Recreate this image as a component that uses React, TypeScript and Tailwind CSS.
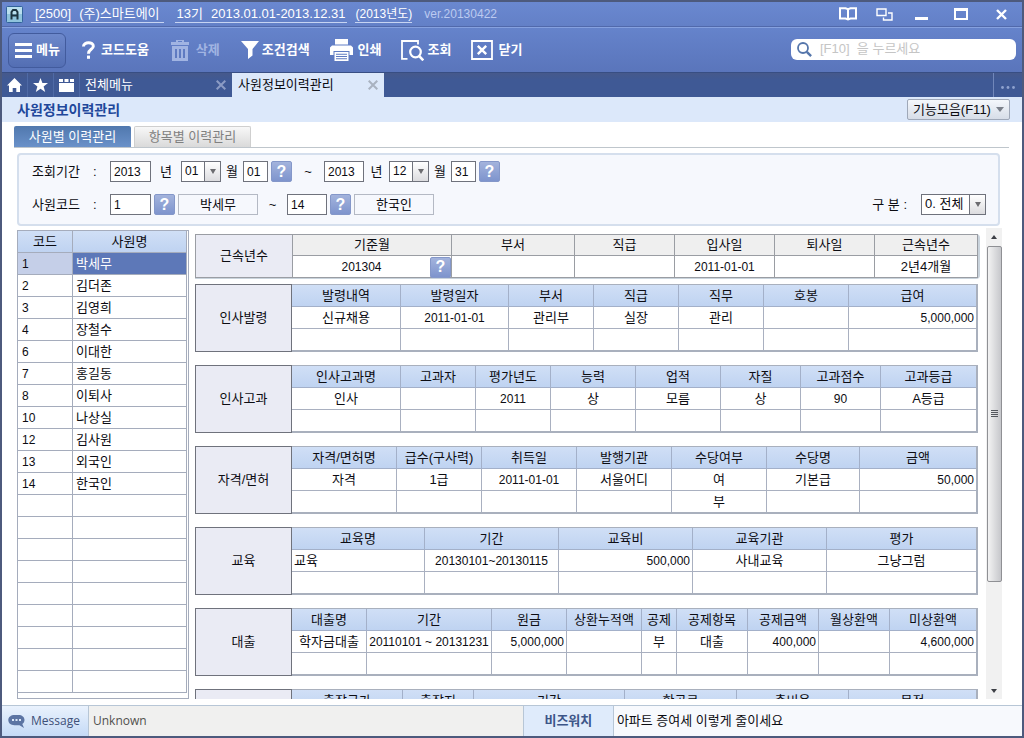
import React, { useId } from "react";

type Column = { title: string; width: string };
type Align = "left" | "center" | "right";
type CellData = { text: string; align?: Align };
type Section = { label: string; columns: Column[]; cells: (CellData | null)[][] };

const sections: Section[] = [
  {
    label: "인사발령",
    columns: [
      { title: "발령내역", width: "w-[109px]" },
      { title: "발령일자", width: "w-[108px]" },
      { title: "부서", width: "w-[85px]" },
      { title: "직급", width: "w-[85px]" },
      { title: "직무", width: "w-[85px]" },
      { title: "호봉", width: "w-[85px]" },
      { title: "급여", width: "" },
    ],
    cells: [
      [{ text: "신규채용" }, { text: "2011-01-01" }, { text: "관리부" }, { text: "실장" }, { text: "관리" }, null, { text: "5,000,000", align: "right" }],
      [null, null, null, null, null, null, null],
    ],
  },
  {
    label: "인사고과",
    columns: [
      { title: "인사고과명", width: "w-[109px]" },
      { title: "고과자", width: "w-[75px]" },
      { title: "평가년도", width: "w-[75px]" },
      { title: "능력", width: "w-[85px]" },
      { title: "업적", width: "w-[85px]" },
      { title: "자질", width: "w-[80px]" },
      { title: "고과점수", width: "w-[80px]" },
      { title: "고과등급", width: "" },
    ],
    cells: [
      [{ text: "인사" }, null, { text: "2011" }, { text: "상" }, { text: "모름" }, { text: "상" }, { text: "90" }, { text: "A등급" }],
      [null, null, null, null, null, null, null, null],
    ],
  },
  {
    label: "자격/면허",
    columns: [
      { title: "자격/면허명", width: "w-[105px]" },
      { title: "급수(구사력)", width: "w-[85px]" },
      { title: "취득일", width: "w-[95px]" },
      { title: "발행기관", width: "w-[95px]" },
      { title: "수당여부", width: "w-[95px]" },
      { title: "수당명", width: "w-[93px]" },
      { title: "금액", width: "" },
    ],
    cells: [
      [{ text: "자격" }, { text: "1급" }, { text: "2011-01-01" }, { text: "서울어디" }, { text: "여" }, { text: "기본급" }, { text: "50,000", align: "right" }],
      [null, null, null, null, { text: "부" }, null, null],
    ],
  },
  {
    label: "교육",
    columns: [
      { title: "교육명", width: "w-[133px]" },
      { title: "기간", width: "w-[134px]" },
      { title: "교육비", width: "w-[134px]" },
      { title: "교육기관", width: "w-[134px]" },
      { title: "평가", width: "" },
    ],
    cells: [
      [{ text: "교육", align: "left" }, { text: "20130101~20130115" }, { text: "500,000", align: "right" }, { text: "사내교육" }, { text: "그냥그럼" }],
      [null, null, null, null, null],
    ],
  },
  {
    label: "대출",
    columns: [
      { title: "대출명", width: "w-[75px]" },
      { title: "기간", width: "w-[125px]" },
      { title: "원금", width: "w-[75px]" },
      { title: "상환누적액", width: "w-[75px]" },
      { title: "공제", width: "w-[35px]" },
      { title: "공제항목", width: "w-[71px]" },
      { title: "공제금액", width: "w-[71px]" },
      { title: "월상환액", width: "w-[71px]" },
      { title: "미상환액", width: "" },
    ],
    cells: [
      [{ text: "학자금대출" }, { text: "20110101 ~ 20131231" }, { text: "5,000,000", align: "right" }, null, { text: "부" }, { text: "대출" }, { text: "400,000", align: "right" }, null, { text: "4,600,000", align: "right" }],
      [null, null, null, null, null, null, null, null, null],
    ],
  },
  {
    label: "출장",
    columns: [
      { title: "출장국가", width: "w-[111px]" },
      { title: "출장지", width: "w-[71px]" },
      { title: "기간", width: "w-[151px]" },
      { title: "항공료", width: "w-[112px]" },
      { title: "총비용", width: "w-[112px]" },
      { title: "목적", width: "" },
    ],
    cells: [
      [null, null, null, null, null, null],
      [null, null, null, null, null, null],
    ],
  },
];

const employees: [string, string][] = [
  ["1", "박세무"],
  ["2", "김더존"],
  ["3", "김영희"],
  ["4", "장철수"],
  ["6", "이대한"],
  ["7", "홍길동"],
  ["8", "이퇴사"],
  ["10", "나상실"],
  ["12", "김사원"],
  ["13", "외국인"],
  ["14", "한국인"],
];

const blankRows = [0, 1, 2, 3, 4, 5, 6, 7, 8];

const alignClass: Record<Align, string> = {
  left: "text-left",
  center: "text-center",
  right: "text-right",
};

function Cell({ data }: { data: CellData | null }) {
  const numeric = data !== null && /^[\d,\-~ ]+$/.test(data.text);
  return (
    <td
      className={`h-[22px] border-r border-b border-[#a9b0c0] px-[2px] last:border-r-0 ${
        numeric ? "text-xs leading-4" : ""
      } ${alignClass[data?.align ?? "center"]}`}
    >
      {data?.text}
    </td>
  );
}

function SectionBlock({ section }: { section: Section }) {
  const id = useId();
  return (
    <div className="flex h-[68px] shrink-0">
      <h3
        id={id}
        className="flex w-[97px] shrink-0 items-center justify-center border border-[#6f727c] bg-[#eaebf4]"
      >
        {section.label}
      </h3>
      <div className="min-w-0 flex-1 overflow-hidden border-t border-r-2 border-b-2 border-[#a9b0bd]">
        <table aria-labelledby={id} className="w-full table-fixed border-separate border-spacing-0">
          <thead>
            <tr>
              {section.columns.map((c) => (
                <th
                  key={c.title}
                  className={`h-[22px] border-r border-b border-[#a3b0c9] bg-linear-to-b from-[#d0dff6] to-[#bfd3f1] font-normal last:border-r-0 ${c.width}`}
                >
                  {c.title}
                </th>
              ))}
            </tr>
          </thead>
          <tbody>
            {section.cells.map((row, r) => (
              <tr key={r}>
                {row.map((cell, i) => (
                  <Cell key={i} data={cell} />
                ))}
              </tr>
            ))}
          </tbody>
        </table>
      </div>
    </div>
  );
}

const tenureHeads: Column[] = [
  { title: "기준월", width: "w-[159px]" },
  { title: "부서", width: "w-[123px]" },
  { title: "직급", width: "w-[100px]" },
  { title: "입사일", width: "w-[100px]" },
  { title: "퇴사일", width: "w-[100px]" },
  { title: "근속년수", width: "" },
];

function TenureBlock() {
  const cell = "h-[22px] border-r border-[#9a9da3] text-center";
  return (
    <div className="flex h-[45px] shrink-0 rounded-r-sm border-r-2 border-b border-[#c9d3dc]">
      <h3 id="tenure" className="flex w-[98px] shrink-0 items-center justify-center border border-[#9a9da3] bg-[#eaebf4]">
        근속년수
      </h3>
      <div className="min-w-0 flex-1 border-y border-[#9a9da3]">
        <table aria-labelledby="tenure" className="w-full table-fixed border-separate border-spacing-0">
          <thead>
            <tr>
              {tenureHeads.map((c) => (
                <th key={c.title} className={`h-[21px] border-r border-b border-[#9a9da3] bg-[#efefef] font-normal ${c.width}`}>
                  {c.title}
                </th>
              ))}
            </tr>
          </thead>
          <tbody>
            <tr>
              <td className={cell}>
                <div className="flex items-center">
                  <span className="flex-1 text-xs">201304</span>
                  <HelpButton />
                </div>
              </td>
              <td className={cell} />
              <td className={cell} />
              <td className={`${cell} text-xs leading-4`}>2011-01-01</td>
              <td className={cell} />
              <td className={cell}>2년4개월</td>
            </tr>
          </tbody>
        </table>
      </div>
    </div>
  );
}

function HelpButton() {
  return (
    <button
      type="button"
      className="flex h-[21px] w-[21px] shrink-0 items-center justify-center rounded-xs border border-[#8497c9] bg-linear-to-b from-[#a3b3dc] to-[#7e94cd] text-base leading-4 font-bold text-white"
    >
      ?
    </button>
  );
}

function Field({ id, value, width }: { id: string; value: string; width: string }) {
  return (
    <input
      id={id}
      defaultValue={value}
      className={`h-[21px] border border-[#6f727c] bg-white px-[3px] text-xs outline-none ${width}`}
    />
  );
}

function Drop({ id, value, width, text }: { id: string; value: string; width: string; text: string }) {
  return (
    <span className={`relative flex h-[21px] border border-[#6f727c] bg-white ${width}`}>
      <select id={id} defaultValue={value} className={`w-full appearance-none pr-4 pl-[3px] pb-[2px] leading-4 outline-none ${text}`}>
        <option>{value}</option>
      </select>
      <span className="pointer-events-none absolute inset-y-0 right-0 flex w-4 items-center justify-center border-l border-[#6f727c] bg-linear-to-b from-white to-[#dcdcdf]">
        <svg viewBox="0 0 6 5" className="h-[5px] w-[6px]" fill="#6c6c70">
          <path d="M0 0h6L3 5z" />
        </svg>
      </span>
    </span>
  );
}

function SearchPanel() {
  return (
    <form className="mt-[5px] mr-[22px] ml-[15px] flex flex-col gap-3 rounded-sm border-2 border-[#d5dfed] bg-[#f6f8fd] pt-[6px] pr-3 pb-[9px] pl-[13px]">
      <div className="flex items-center">
        <label htmlFor="from-year" className="w-[61px]">조회기간</label>
        <span className="w-[17px]">:</span>
        <Field id="from-year" value="2013" width="w-[41px]" />
        <label htmlFor="from-year" className="w-[30px] text-center">년</label>
        <Drop id="from-month" value="01" width="w-10" text="text-xs" />
        <label htmlFor="from-month" className="w-[22px] text-center">월</label>
        <Field id="from-day" value="01" width="mr-[3px] w-[25px]" />
        <HelpButton />
        <span className="w-8 text-center">~</span>
        <Field id="to-year" value="2013" width="w-10" />
        <label htmlFor="to-year" className="w-[25px] text-center">년</label>
        <Drop id="to-month" value="12" width="w-10" text="text-xs" />
        <label htmlFor="to-month" className="w-[22px] text-center">월</label>
        <Field id="to-day" value="31" width="mr-[3px] w-[25px]" />
        <HelpButton />
      </div>
      <div className="flex items-center">
        <label htmlFor="from-code" className="w-[61px]">사원코드</label>
        <span className="w-[17px]">:</span>
        <Field id="from-code" value="1" width="mr-[3px] w-[41px]" />
        <HelpButton />
        <output className="ml-[3px] flex h-[21px] w-20 items-center justify-center border border-[#b4b9c4]">박세무</output>
        <span className="w-[29px] text-center">~</span>
        <Field id="to-code" value="14" width="mr-[3px] w-10" />
        <HelpButton />
        <output className="ml-[3px] flex h-[21px] w-20 items-center justify-center border border-[#b4b9c4]">한국인</output>
        <label htmlFor="kind" className="mr-[14px] ml-auto">구 분 :</label>
        <Drop id="kind" value="0. 전체" width="w-[65px]" text="text-[13px]" />
      </div>
    </form>
  );
}

function EmployeeList() {
  const line = "border-r border-b border-[#a5acbc]";
  return (
    <div className="w-[172px] shrink-0 overflow-hidden border border-[#a5acbc]">
      <table className="w-[169px] table-fixed border-separate border-spacing-0">
        <thead>
          <tr>
            <th className={`h-[22px] w-[55px] bg-linear-to-b from-[#d0dff6] to-[#bfd3f1] font-normal ${line}`}>코드</th>
            <th className={`bg-linear-to-b from-[#d0dff6] to-[#bfd3f1] font-normal ${line}`}>사원명</th>
          </tr>
        </thead>
        <tbody>
          {employees.map(([code, name], i) => (
            <tr key={code}>
              <td className={`h-[22px] pl-1 text-xs leading-4 ${line} ${i === 0 ? "bg-[#c5cfe8]" : ""}`}>{code}</td>
              <td className={`pl-[3px] ${line} ${i === 0 ? "bg-[#5d78b8] text-white" : ""}`}>{name}</td>
            </tr>
          ))}
          {blankRows.map((n) => (
            <tr key={n}>
              <td className={`h-[22px] ${line}`} />
              <td className={line} />
            </tr>
          ))}
        </tbody>
      </table>
    </div>
  );
}

function ScrollBar() {
  return (
    <div className="ml-[6px] flex w-4 shrink-0 flex-col items-center bg-[#f1f1f1]">
      <div className="flex h-[18px] items-center">
        <svg viewBox="0 0 6 4" className="h-1 w-[6px]" fill="#3c3f45">
          <path d="M3 0l3 4H0z" />
        </svg>
      </div>
      <div className="flex w-[15px] flex-[76] items-center justify-center rounded-xs border border-[#8f9094] bg-linear-to-r from-[#f3f3f3] to-[#c6c7cb]">
        <div className="flex w-[7px] flex-col gap-px">
          <i className="h-px bg-[#55585e]" />
          <i className="h-px bg-[#55585e]" />
          <i className="h-px bg-[#55585e]" />
          <i className="h-px bg-[#55585e]" />
        </div>
      </div>
      <div className="flex-[23]" />
      <div className="flex h-4 items-center">
        <svg viewBox="0 0 6 4" className="h-1 w-[6px]" fill="#3c3f45">
          <path d="M0 0h6L3 4z" />
        </svg>
      </div>
    </div>
  );
}

function TitleBar() {
  return (
    <header className="flex h-[25px] shrink-0 items-center border-b border-[#5169ab] bg-linear-to-b from-[#6a88d0] to-[#6380c7] pl-1 text-[13px] leading-4 text-white">
      <svg viewBox="0 0 17 17" className="mr-[8px] h-[17px] w-[17px]">
        <rect x="0.5" y="0.5" width="16" height="16" rx="1" fill="#8fc3dc" stroke="#31639a" />
        <path d="M1 1h15v7H1z" fill="#b9dfee" />
        <path d="M5.500 13.500V6l1.500-2h3l1.500 2v7.500M5.500 9.500h6" fill="none" stroke="#1d3340" strokeWidth="2" />
      </svg>
      <span className="flex gap-2 border-b border-[#c7d4f2] px-1">
        <span>[2500]</span>
        <span>(주)스마트에이</span>
      </span>
      <span className="ml-[11px] flex gap-2 border-b border-[#c7d4f2] px-[2px]">
        <span>13기</span>
        <span>2013.01.01-2013.12.31</span>
      </span>
      <span className="ml-2 border-b border-[#c7d4f2] text-xs leading-4">(2013년도)</span>
      <span className="ml-3 text-xs text-[#bccaf0]">ver.20130422</span>
      <div className="mr-[15px] ml-auto flex items-center">
        <button type="button" className="mr-[19px]">
          <svg viewBox="0 0 18 14" className="h-[14px] w-[18px]" fill="none" stroke="white" strokeWidth="2">
            <path d="M1 1.2h5.500L9 2.200l2.500-1H17v10.300h-5.500L9 12.500l-2.500-1H1zM9 2v11.500" />
          </svg>
        </button>
        <button type="button" className="mr-[22px]">
          <svg viewBox="0 0 17 13" className="h-[13px] w-[17px]" fill="none" stroke="white" strokeWidth="1.400">
            <path d="M1 1h9v6.500H1zM12 5h4v7H7.500V9.500" />
          </svg>
        </button>
        <button type="button" className="mr-[26px]">
          <svg viewBox="0 0 13 13" className="h-[13px] w-[13px]" fill="white">
            <path d="M0 9h13v3H0z" />
          </svg>
        </button>
        <button type="button" className="mr-7">
          <svg viewBox="0 0 14 12" className="h-3 w-[14px]" fill="white" fillRule="evenodd">
            <path d="M0 0h14v12H0zM2 3h10v7H2z" />
          </svg>
        </button>
        <button type="button">
          <svg viewBox="0 0 11 11" className="h-[11px] w-[11px]" stroke="white" strokeWidth="2.400">
            <path d="M1 1l9 9M10 1l-9 9" />
          </svg>
        </button>
      </div>
    </header>
  );
}

function ToolBar() {
  const item = "flex items-center text-[13px] font-bold";
  return (
    <nav className="flex h-[45px] shrink-0 items-center border-t border-[#86a1df] bg-linear-to-b from-[#6583cb] to-[#5a75bb] pl-[6px] text-white">
      <button
        type="button"
        className={`${item} h-[35px] w-[58px] gap-1 rounded-md border border-[#425b9d] bg-linear-to-b from-[#6d88cb] to-[#536eb3] pl-[6px]`}
      >
        <svg viewBox="0 0 17 15" className="h-[15px] w-[17px]" fill="white">
          <path d="M0 0h17v3H0zM0 6h17v3H0zM0 12h17v3H0z" />
        </svg>
        메뉴
      </button>
      <button type="button" className={`${item} ml-[16px] gap-[6px]`}>
        <svg viewBox="0 0 13 18" className="h-[18px] w-[13px]" fill="none" stroke="white" strokeWidth="3">
          <path d="M1.500 5.500C1.500 0.500 11.500 0.300 11.300 5.200 11.200 8.500 6.500 8.200 6.500 12.800" />
          <path d="M6.500 14.600v3.200" />
        </svg>
        코드도움
      </button>
      <button type="button" disabled className={`${item} ml-[22px] gap-[7px] text-[#a1b4e2]`}>
        <svg viewBox="0 0 18 21" className="h-[21px] w-[18px]" fill="#a1b4e2" fillRule="evenodd">
          <path d="M5 0h8v2h5v3H0V2h5zM7 1v1h4V1zM1 6h16v15H1zM4 9v9h2V9zM8 9v9h2V9zM12 9v9h2V9z" />
        </svg>
        삭제
      </button>
      <button type="button" className={`${item} ml-[21px] gap-[3px]`}>
        <svg viewBox="0 0 18 18" className="h-[18px] w-[18px]" fill="white">
          <path d="M0 0h18l-6.500 8v6.500L7 18V8z" />
        </svg>
        조건검색
      </button>
      <button type="button" className={`${item} ml-[20px] gap-[5px]`}>
        <svg viewBox="0 0 23 22" className="h-[22px] w-[23px]" fill="white" fillRule="evenodd">
          <path d="M5 0h13v5.500H5zM2 6.500h19l2 2V16h-3.500v-4h-16v4H0V8.500zM4.500 13h14v9h-14zM6 14.800v1h11v-1zM6 17v1h11v-1zM6 19.300v1h11v-1z" />
        </svg>
        인쇄
      </button>
      <button type="button" className={`${item} ml-[19px] gap-1`}>
        <svg viewBox="0 0 23 21" className="h-[21px] w-[23px]" fill="none" stroke="white">
          <path d="M6.500 18.800H1V1h16v3.500" strokeWidth="1.800" />
          <circle cx="14.500" cy="12" r="5.300" strokeWidth="2.200" />
          <path d="M18 15.800l4.300 4.500" strokeWidth="2.600" />
        </svg>
        조회
      </button>
      <button type="button" className={`${item} ml-[20px] gap-[5px]`}>
        <svg viewBox="0 0 22 20" className="h-5 w-[22px]" fill="none" stroke="white">
          <path d="M1 1h20v18H1z" strokeWidth="1.800" />
          <path d="M6.800 5.800l8.400 8.400M15.200 5.800l-8.400 8.400" strokeWidth="2.400" />
        </svg>
        닫기
      </button>
      <label className="mr-[6px] mb-[2px] ml-auto flex h-[21px] w-[225px] items-center gap-2 rounded-md bg-white px-[6px]">
        <svg viewBox="0 0 15 15" className="h-[15px] w-[15px] shrink-0" fill="none" stroke="#5576ab">
          <circle cx="6" cy="6" r="5" strokeWidth="1.800" />
          <path d="M9.800 9.800l4.300 4.300" strokeWidth="2.400" />
        </svg>
        <input placeholder="[F10]  을 누르세요" className="min-w-0 flex-1 text-[13px] leading-4 outline-none placeholder:text-[#c5c5c5]" />
      </label>
    </nav>
  );
}

function CloseMark({ color }: { color: string }) {
  return (
    <svg viewBox="0 0 10 10" className="h-[10px] w-[10px]" stroke={color} strokeWidth="2">
      <path d="M0.700 0.700l8.600 8.600M9.300 0.700L0.700 9.300" />
    </svg>
  );
}

function TabBar() {
  const box = "flex h-full w-[26px] items-center justify-center border-r border-[#4f6aa6]";
  return (
    <div className="flex h-[25px] shrink-0 items-stretch border-t border-[#384e83] bg-linear-to-b from-[#46598b] to-[#3f5995] to-30%">
      <button type="button" className={box}>
        <svg viewBox="0 0 15 14" className="h-[14px] w-[15px]" fill="white">
          <path d="M7.500 0L15 7.500h-2V14H9.300v-4H5.700v4H2V7.500H0z" />
        </svg>
      </button>
      <button type="button" className={box}>
        <svg viewBox="0 0 15 14" className="h-[14px] w-[15px]" fill="white">
          <path d="M7.500 0l1.900 5H15l-4.400 3.400L12.200 14 7.500 10.700 2.800 14l1.600-5.600L0 5h5.600z" />
        </svg>
      </button>
      <button type="button" className={box}>
        <svg viewBox="0 0 15 13" className="h-[13px] w-[15px]" fill="white">
          <path d="M0 0h4v3H0zM5.500 0h4v3h-4zM11 0h4v3h-4zM0 4h15v9H0z" />
        </svg>
      </button>
      <div className="flex w-[152px] items-center justify-between pr-[6px] pl-[5px] text-white">
        <button type="button">전체메뉴</button>
        <button type="button">
          <CloseMark color="#8b9bc4" />
        </button>
      </div>
      <div className="flex w-[152px] items-center justify-between bg-[#dce8fa] pr-[6px] pl-[6px]">
        <button type="button">사원정보이력관리</button>
        <button type="button">
          <CloseMark color="#a9b2c0" />
        </button>
      </div>
      <button type="button" className="ml-auto flex w-[29px] items-center justify-center border-l border-[#7187ba] pt-1">
        <svg viewBox="0 0 14 3" className="h-[3px] w-[14px]" fill="#8fa2cf">
          <circle cx="1.500" cy="1.500" r="1.400" />
          <circle cx="7" cy="1.500" r="1.400" />
          <circle cx="12.500" cy="1.500" r="1.400" />
        </svg>
      </button>
    </div>
  );
}

export default function App() {
  return (
    <div className="flex h-screen flex-col overflow-hidden border-2 border-[#4d5a7d] bg-white font-['Liberation_Sans','Noto_Sans_CJK_KR',sans-serif] text-[13px] leading-4 whitespace-nowrap text-[#0c0c12]">
      <TitleBar />
      <ToolBar />
      <TabBar />
      <div className="flex h-[25px] shrink-0 items-center justify-between bg-[#dce8fa] pr-3 pl-[15px]">
        <h1 className="text-sm leading-4 font-bold text-[#21479a]">사원정보이력관리</h1>
        <button
          type="button"
          className="flex h-[21px] w-[103px] items-center justify-between rounded-xs border border-[#9fa8b8] bg-linear-to-b from-[#f4f7fb] to-[#d7dde8] px-[5px]"
        >
          기능모음(F11)
          <svg viewBox="0 0 8 5" className="h-[5px] w-2" fill="#7b808a">
            <path d="M0 0h8L4 5z" />
          </svg>
        </button>
      </div>
      <div className="mr-[13px] ml-3 flex h-[26px] shrink-0 items-end gap-[3px] border-b border-[#bfc6cc]">
        <button type="button" className="h-[21px] w-[117px] rounded-t-xs bg-linear-to-b from-[#5078ae] to-[#6a91c9] text-white">
          사원별 이력관리
        </button>
        <button type="button" className="h-[21px] w-[117px] rounded-t-xs border border-b-0 border-[#cfcfcf] bg-linear-to-b from-[#f8f8f8] to-[#dadada] text-[#808080]">
          항목별 이력관리
        </button>
      </div>
      <SearchPanel />
      <div className="mr-5 mb-[6px] ml-[15px] flex min-h-0 flex-1 pt-[2px]">
        <div className="flex pt-[2px]">
          <EmployeeList />
        </div>
        <main className="ml-[6px] flex min-w-0 flex-1 flex-col overflow-hidden pt-[6px]">
          <TenureBlock />
          <div className="mt-[5px] mr-[2px] flex flex-col gap-[13px]">
            {sections.map((s) => (
              <SectionBlock key={s.label} section={s} />
            ))}
          </div>
        </main>
        <ScrollBar />
      </div>
      <footer className="flex h-[31px] shrink-0 items-stretch border-t border-[#b7c6d6] bg-[#f7f9fd]">
        <button
          type="button"
          className="flex w-[87px] items-center gap-[6px] border-r border-[#b7c6d6] bg-linear-to-b from-[#eaf2fd] to-[#c5daf6] pl-[6px] font-['Open_Sans',sans-serif] text-xs text-[#3e5078]"
        >
          <svg viewBox="0 0 17 13" className="h-[13px] w-[17px]">
            <path d="M6.500 0h4C14 0 16.500 2 16.500 5c0 2-1 3.300-2.200 4l1.700 4-4.500-2.800h-5C2.500 10.200 0.300 8 0.300 5 0.300 2 3 0 6.500 0z" fill="#5c74a3" />
            <path d="M4 4h2v2H4zM7.500 4h2v2h-2zM11 4h2v2h-2z" fill="#dbe7f8" />
          </svg>
          Message
        </button>
        <p className="flex min-w-0 flex-[434] basis-0 items-center bg-[#f0f0ef] pl-1 font-['Open_Sans',sans-serif] text-xs text-[#50504e]">Unknown</p>
        <button type="button" className="w-[91px] border-x border-[#b7c6d6] bg-[#dfebfb] font-bold text-[#3c5588]">
          비즈워치
        </button>
        <p className="flex min-w-0 flex-[409] basis-0 items-center pl-[3px]">아파트 증여세 이렇게 줄이세요</p>
      </footer>
    </div>
  );
}
